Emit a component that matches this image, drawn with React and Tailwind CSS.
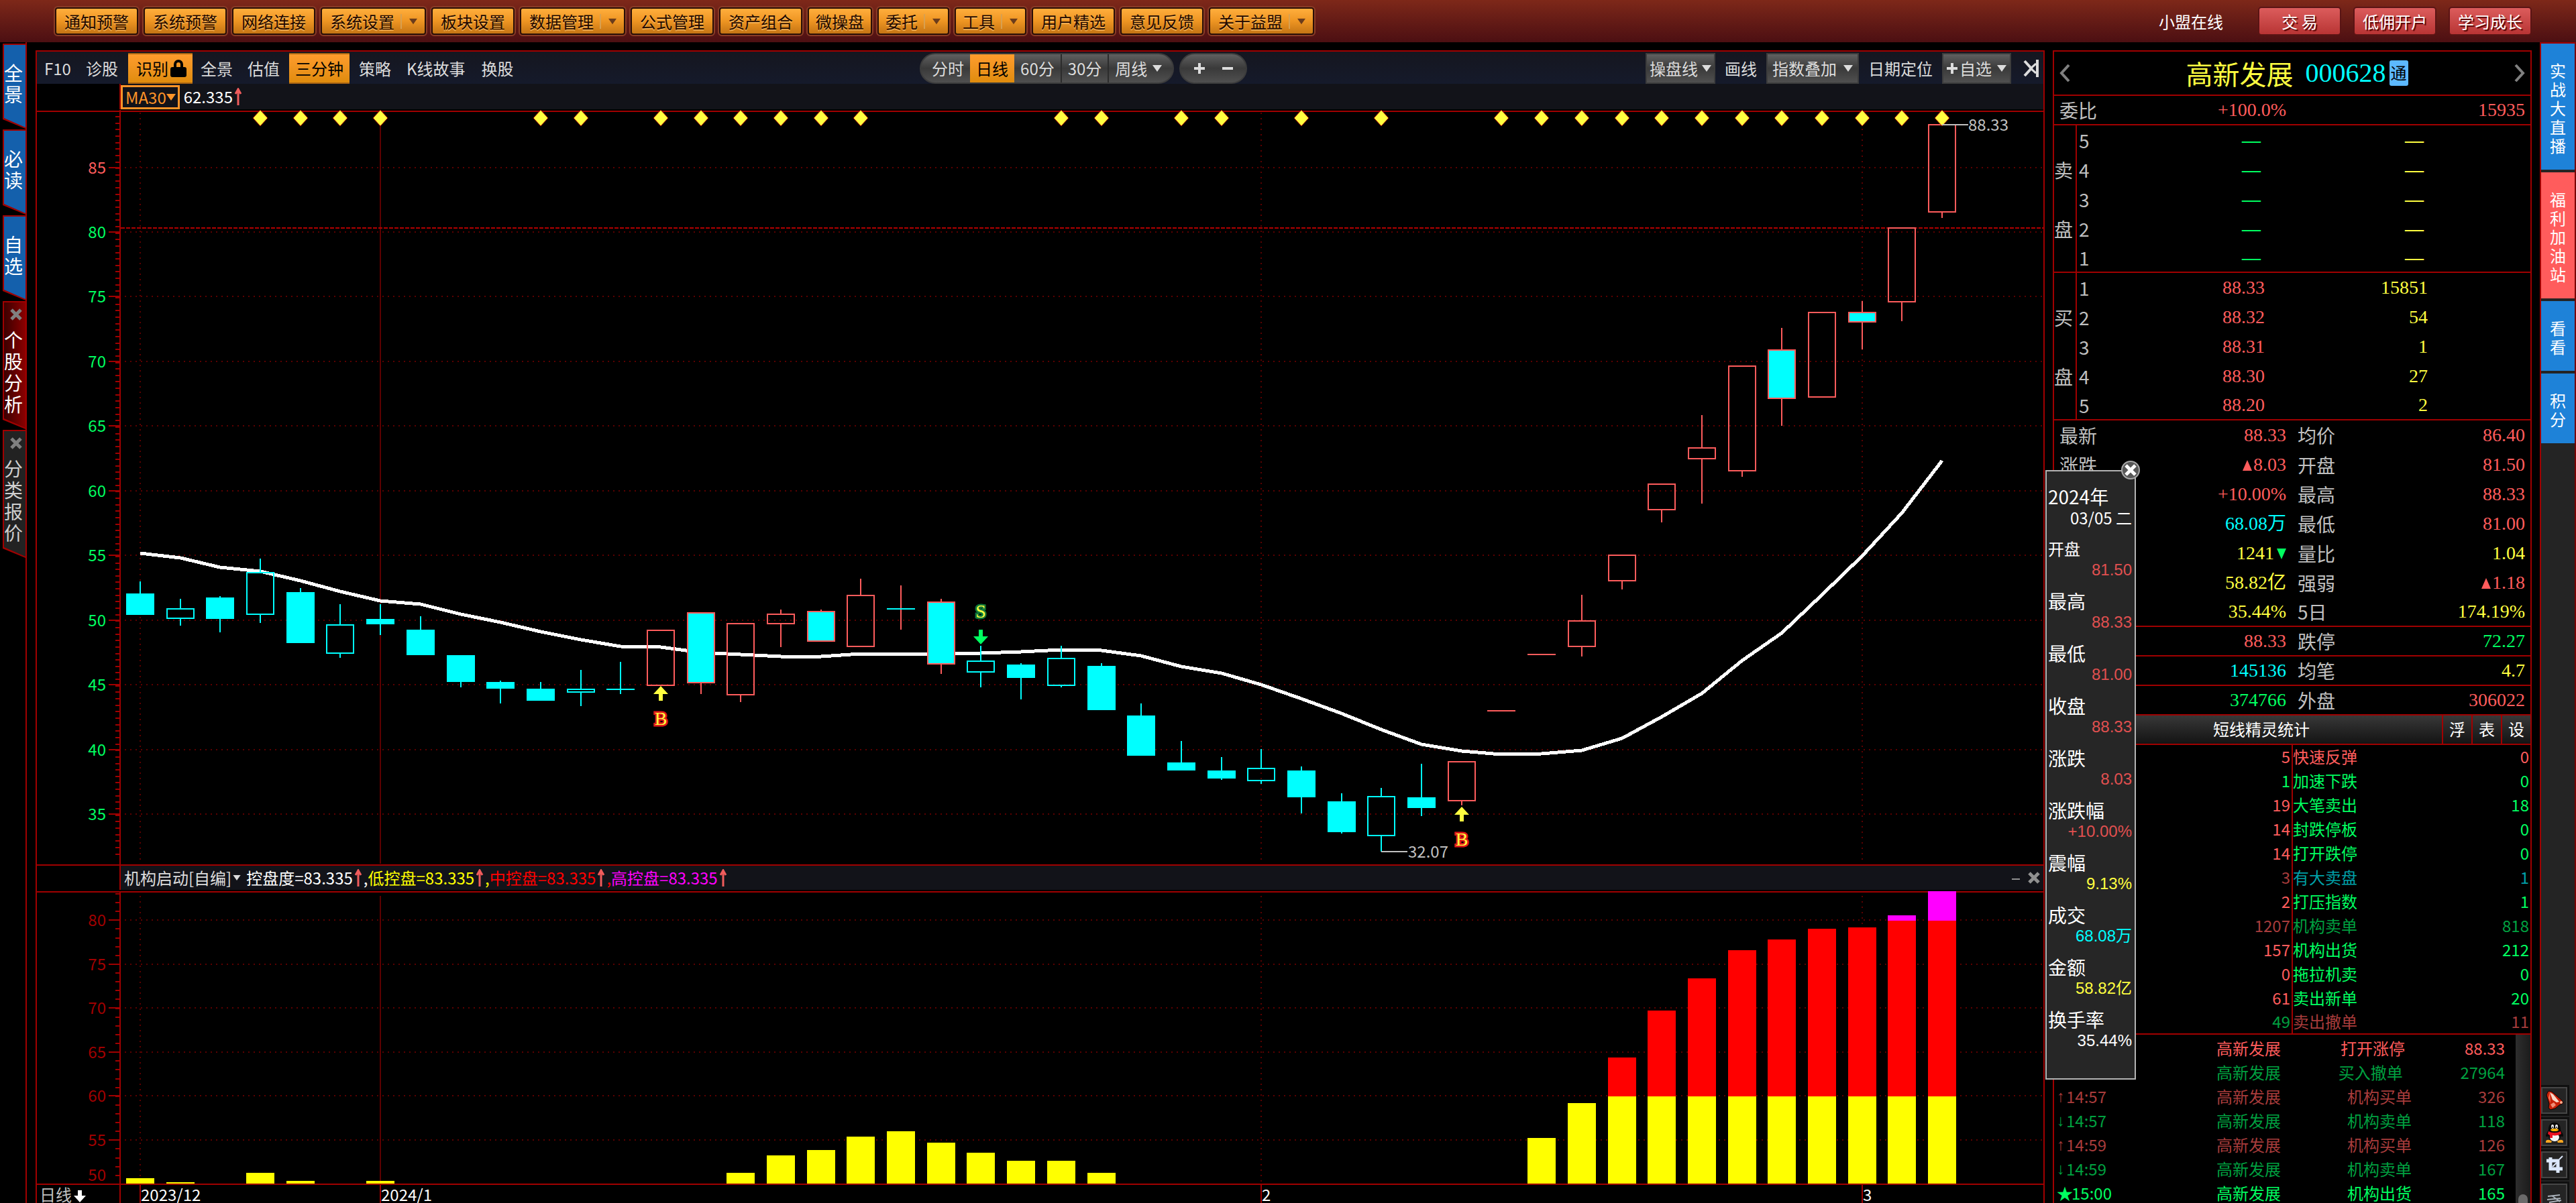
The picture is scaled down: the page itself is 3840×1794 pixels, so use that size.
import { useState } from 'react'
import clsx from 'clsx'

const MENU = [
  ['通知预警'], ['系统预警'], ['网络连接'], ['系统设置', true], ['板块设置'], ['数据管理', true], ['公式管理'],
  ['资产组合'], ['微操盘'], ['委托', true], ['工具', true], ['用户精选'], ['意见反馈'], ['关于益盟', true],
]

const LEFT_TABS = [
  { text: '全景', kind: 'blue' },
  { text: '必读', kind: 'blue' },
  { text: '自选', kind: 'blue' },
  { text: '个股分析', kind: 'red', closable: true },
  { text: '分类报价', kind: 'gray', closable: true },
]

const SIDE_TABS = [
  ['实战大直播', 'bg-[#1e82d8] h-[188px]'],
  ['福利加油站', 'bg-[#ff5c5c] h-[188px]'],
  ['看看', 'bg-[#1e82d8] h-[104px]'],
  ['积分', 'bg-[#1e82d8] h-[104px]'],
]

const COLOR = {
  red: 'text-[#ff5c5c]', green: 'text-[#00ff60]', yellow: 'text-[#ffff40]', cyan: 'text-[#00ffff]',
  dimRed: 'text-[#a83c3c]', dimGreen: 'text-[#00a040]', dimCyan: 'text-[#00a0a8]',
}

// [high, top, bottom, low, kind]  s = solid, h = hollow, r = red hollow, m = red outline with cyan body
const CANDLES = [
  [867, 885, 917, 917, 's'], [893, 907, 923, 933, 'h'], [889, 891, 923, 943, 's'], [833, 853, 917, 929, 'h'],
  [877, 883, 959, 959, 's'], [901, 931, 975, 981, 'h'], [901, 923, 931, 947, 's'], [919, 939, 977, 977, 's'],
  [977, 977, 1017, 1025, 's'], [1015, 1017, 1027, 1049, 's'], [1017, 1027, 1045, 1045, 's'], [999, 1027, 1033, 1053, 'h'],
  [987, 1027, 1029, 1035, 's'], [939, 939, 1023, 1023, 'r'], [913, 913, 1019, 1035, 'm'], [929, 929, 1037, 1047, 'r'],
  [909, 915, 931, 965, 'r'], [909, 911, 957, 957, 'm'], [863, 887, 965, 965, 'r'], [873, 907, 909, 939, 'm'],
  [893, 897, 991, 1005, 'm'], [963, 985, 1003, 1025, 'h'], [989, 991, 1011, 1043, 's'], [963, 981, 1023, 1025, 'h'],
  [989, 993, 1059, 1059, 's'], [1049, 1067, 1127, 1127, 's'], [1105, 1137, 1149, 1149, 's'], [1129, 1149, 1161, 1163, 's'],
  [1117, 1145, 1165, 1169, 'h'], [1143, 1149, 1189, 1213, 's'], [1183, 1195, 1241, 1243, 's'], [1175, 1187, 1247, 1270, 'h'],
  [1139, 1189, 1205, 1217, 's'], [1135, 1135, 1195, 1201, 'r'], [1059, 1059, 1061, 1061, 'r'], [975, 975, 977, 977, 'r'],
  [887, 925, 965, 979, 'r'], [827, 827, 867, 879, 'r'], [721, 721, 761, 779, 'r'], [619, 667, 685, 751, 'r'],
  [545, 545, 703, 711, 'r'], [489, 521, 595, 635, 'm'], [465, 465, 593, 593, 'r'], [449, 465, 481, 521, 'm'],
  [339, 339, 451, 479, 'r'], [185, 185, 317, 325, 'r'],
]

const MA30 = [
  825, 832, 846, 852, 866, 882, 896, 901, 916, 928, 942, 954, 964, 965, 973, 976, 979, 979, 975, 975, 975, 974, 972,
  969, 970, 978, 994, 1004, 1021, 1042, 1064, 1088, 1110, 1120, 1125, 1124, 1119, 1101, 1069, 1034, 985, 944, 887,
  829, 765, 687,
]

const DIAMONDS = [3, 4, 5, 6, 10, 11, 13, 14, 15, 16, 17, 18, 23, 24, 26, 27, 29, 31, 34, 35, 36, 37, 38, 39, 40, 41, 42, 43, 44, 45]

const BARS = {
  0: 1757, 1: 1763, 3: 1749, 4: 1761, 6: 1761, 15: 1749, 16: 1723, 17: 1715, 18: 1695, 19: 1687, 20: 1704, 21: 1719,
  22: 1731, 23: 1731, 24: 1749, 35: 1697, 36: 1645, 37: 1577, 38: 1507, 39: 1459, 40: 1417, 41: 1401, 42: 1385,
  43: 1383, 44: 1365, 45: 1329,
}

const BUY = [['88.33', '15851'], ['88.32', '54'], ['88.31', '1'], ['88.30', '27'], ['88.20', '2']]

const QUOTE = [
  ['最新', '88.33', 'red', '均价', '86.40', 'red'],
  ['涨跌', '8.03', 'red', '开盘', '81.50', 'red', 'up'],
  ['', '+10.00%', 'red', '最高', '88.33', 'red'],
  ['', '68.08万', 'cyan', '最低', '81.00', 'red'],
  ['', '1241', 'yellow', '量比', '1.04', 'yellow', 'down'],
  ['', '58.82亿', 'yellow', '强弱', '1.18', 'red', '', 'up'],
  ['', '35.44%', 'yellow', '5日', '174.19%', 'yellow'],
  ['', '88.33', 'red', '跌停', '72.27', 'green'],
  ['', '145136', 'cyan', '均笔', '4.7', 'yellow'],
  ['', '374766', 'green', '外盘', '306022', 'red'],
]

const STATS = [
  ['5', 'red', '快速反弹', '0', 'red'],
  ['1', 'green', '加速下跌', '0', 'green'],
  ['19', 'red', '大笔卖出', '18', 'green'],
  ['14', 'red', '封跌停板', '0', 'green'],
  ['14', 'red', '打开跌停', '0', 'green'],
  ['3', 'dimRed', '有大卖盘', '1', 'dimCyan'],
  ['2', 'red', '打压指数', '1', 'green'],
  ['1207', 'dimRed', '机构卖单', '818', 'dimGreen'],
  ['157', 'red', '机构出货', '212', 'green'],
  ['0', 'red', '拖拉机卖', '0', 'green'],
  ['61', 'red', '卖出新单', '20', 'green'],
  ['49', 'dimGreen', '卖出撤单', '11', 'dimRed'],
]

const LOG = [
  ['', '', '打开涨停', '88.33', 'red'],
  ['', '', '买入撤单', '27964', 'dimGreen'],
  ['↑', '14:57', '机构买单', '326', 'dimRed'],
  ['↓', '14:57', '机构卖单', '118', 'dimGreen'],
  ['↑', '14:59', '机构买单', '126', 'dimRed'],
  ['↓', '14:59', '机构卖单', '167', 'dimGreen'],
  ['★', '15:00', '机构出货', '165', 'green'],
]

const DAY = [
  ['开盘', '81.50', 'text-[#e05050]'], ['最高', '88.33', 'text-[#e05050]'], ['最低', '81.00', 'text-[#e05050]'],
  ['收盘', '88.33', 'text-[#e05050]'], ['涨跌', '8.03', 'text-[#e05050]'], ['涨跌幅', '+10.00%', 'text-[#e05050]'],
  ['震幅', '9.13%', 'text-[#ffff40]'], ['成交', '68.08万', 'text-[#00ffff]'], ['金额', '58.82亿', 'text-[#ffff40]'],
  ['换手率', '35.44%', 'text-white'],
]

const cx = i => Math.round(209 + i * 59.69)
const priceY = v => Math.round(346 + (80 - v) * 19.29)
const subY = v => Math.round(1372 + (80 - v) * 13.12)

function Caret({ className = 'w-[14px] h-[10px]' }) {
  return <svg viewBox="0 0 14 10" className={clsx('shrink-0', className)}><path d="M0 0h14L7 10z" fill="currentColor" /></svg>
}

function Rise() {
  return (
    <svg viewBox="0 0 16 26" className="w-[16px] h-[26px] shrink-0 text-[#f05c5c]">
      <path d="M8 1v25M4 9l4-7 4 7" fill="none" stroke="currentColor" strokeWidth="3" />
    </svg>
  )
}

function Cross({ className }) {
  return (
    <svg viewBox="0 0 18 18" className={clsx('w-[18px] h-[18px]', className)}>
      <path d="M2 2l14 14M16 2L2 16" stroke="currentColor" strokeWidth="5" />
    </svg>
  )
}

function TopBar() {
  const red = 'w-[124px] h-[43px] rounded-[5px] border-2 border-[#5a1414] bg-linear-to-b from-[#dc5c5c] to-[#b83434] text-white text-shadow-[2px_2px_1px_#500000]'
  return (
    <header className="h-[63px] shrink-0 flex items-center bg-linear-to-b from-[#7e2819] to-[#4c0f12] pl-[82px] pr-[66px]">
      <nav className="flex gap-[8px] text-[#200800]">
        {MENU.map(([label, drop]) => (
          <button key={label}
            className={clsx(
              'h-[41px] flex items-center rounded-[4px] border-2 border-[#2a0f06] outline-2 outline-[#8a3c26] bg-linear-to-b from-[#ffae3c] via-[#ee9522] to-[#c47414] text-shadow-[0_2px_0_#ffc878a0]',
              label.length < 4 ? 'pl-[10px]' : 'pl-[12px]',
              !drop && (label.length < 4 ? 'pr-[10px]' : 'pr-[12px]'))}>
            {label}
            {drop && (
              <span className="flex items-center ml-[9px]">
                <span className="h-[22px] border-l-2 border-[#d8a050]" />
                <span className="w-[34px] flex justify-center text-[#6a3c1c]"><Caret className="w-[12px] h-[12px]" /></span>
              </span>
            )}
          </button>
        ))}
      </nav>
      <div className="ml-auto flex items-center gap-[18px]">
        <a href="#chat" className="text-white mr-[34px]">小盟在线</a>
        <button className={red}>交 易</button>
        <button className={red}>低佣开户</button>
        <button className={red}>学习成长</button>
      </div>
    </header>
  )
}

function LeftTabs() {
  return (
    <nav className="w-[40px] shrink-0 border-r-2 border-[#a00000] pl-[4px] pt-[2px] text-[28px] leading-[32px]">
      {LEFT_TABS.map(t => (
        <button key={t.text}
          className={clsx(
            'block w-full bg-[#a00000] pt-[2px] pl-[2px] pb-[2px] mb-px [clip-path:polygon(0_0,100%_0,100%_100%,0_calc(100%-14px))]',
            t.closable ? 'h-[191px]' : 'h-[127px]')}>
          <span className={clsx(
            'h-full flex flex-col [clip-path:polygon(0_0,100%_0,100%_100%,0_calc(100%-14px))]',
            t.kind === 'blue' && 'bg-[#1460ac] text-white pt-[25px]',
            t.kind === 'red' && 'bg-linear-to-r from-[#3c0000] to-[#8c0000] text-white pt-[9px]',
            t.kind === 'gray' && 'bg-[#222222] text-[#d0d0d0] pt-[9px]')}>
            {t.closable && <Cross className="text-[#808080] mb-[12px] ml-[9px]" />}
            <span className="w-[28px] whitespace-normal break-all">{t.text}</span>
          </span>
        </button>
      ))}
    </nav>
  )
}

function Toolbar() {
  const [period, setPeriod] = useState('日线')
  const hot = 'h-[46px] flex items-center border-y-2 border-[#a86414] bg-linear-to-b from-[#ff9c2c] to-[#e08c0c] text-black'
  const gray = 'h-[46px] flex items-center border-2 border-[#3c3c3c] bg-linear-to-b from-[#606060] via-[#3a3a3a] to-[#505050]'
  return (
    <div className="h-[48px] pt-[2px] flex items-center justify-between bg-linear-to-b from-[#15161f] to-[#151a2b] text-[#dcdcdc]">
      <div className="flex items-center">
        <button className="px-[11px]">F10</button>
        <button className="px-[11px]">诊股</button>
        <button className={clsx(hot, 'ml-[4px] mr-px pl-[12px] pr-[8px] gap-[2px]')}>
          识别
          <svg viewBox="0 0 26 28" className="w-[26px] h-[28px]">
            <path d="M8 13V8a5 5 0 0 1 10 0v5" fill="none" stroke="#000" strokeWidth="4" />
            <rect x="1" y="12" width="24" height="15" rx="3" fill="#000" />
          </svg>
        </button>
        <button className="px-[11px]">全景</button>
        <button className="px-[11px]">估值</button>
        <button className={clsx(hot, 'ml-[3px] mr-[3px] px-[9px]')}>三分钟</button>
        <button className="px-[11px]">策略</button>
        <button className="px-[12px]">K线故事</button>
        <button className="px-[12px]">换股</button>
      </div>
      <div className="flex gap-[8px]">
        <div className={clsx(gray, 'rounded-full overflow-hidden')}>
          {['分时', '日线', '60分', '30分', '周线'].map(p => (
            <button key={p} onClick={() => setPeriod(p)}
              className={clsx(
                'h-full flex items-center gap-[8px] px-[9px]',
                p === '分时' && 'pl-[16px]', p === '周线' && 'pr-[16px]',
                (p === '60分' || p === '30分') && 'border-r-2 border-[#2c2c2c]',
                p === period && 'bg-linear-to-b from-[#ff9c2c] to-[#e08c0c] text-black')}>
              {p}{p === '周线' && <Caret />}
            </button>
          ))}
        </div>
        <div className={clsx(gray, 'rounded-full w-[101px] justify-center gap-[26px]')}>
          <button aria-label="放大"><svg viewBox="0 0 16 16" className="w-[16px] h-[16px]"><path d="M8 0v16M0 8h16" stroke="#dcdcdc" strokeWidth="4" /></svg></button>
          <button aria-label="缩小"><svg viewBox="0 0 16 16" className="w-[16px] h-[16px]"><path d="M0 8h16" stroke="#dcdcdc" strokeWidth="4" /></svg></button>
        </div>
      </div>
      <div className="flex items-center">
        <button className={clsx(gray, 'px-[4px] gap-[6px]')}>操盘线<Caret /></button>
        <button className="px-[14px]">画线</button>
        <button className={clsx(gray, 'px-[7px] gap-[10px]')}>指数叠加<Caret /></button>
        <button className="px-[14px]">日期定位</button>
        <button className={clsx(gray, 'px-[5px] gap-[8px]')}>
          <span className="flex items-center gap-[3px]">
            <svg viewBox="0 0 16 16" className="w-[16px] h-[16px]"><path d="M8 0v16M0 8h16" stroke="#dcdcdc" strokeWidth="4" /></svg>自选
          </span>
          <Caret />
        </button>
        <button aria-label="收起" className="ml-[18px] mr-[6px]">
          <svg viewBox="0 0 24 26" className="w-[24px] h-[26px]"><path d="M2 2l10 11L2 24M21 0v26" fill="none" stroke="#dcdcdc" strokeWidth="4" /><path d="M19 6l-8 7 8 7" fill="none" stroke="#dcdcdc" strokeWidth="3" /></svg>
        </button>
      </div>
    </div>
  )
}

function Candle({ i, data }) {
  const [high, top, bottom, low, kind] = data
  const color = kind === 's' || kind === 'h' ? '#00ffff' : '#ff5c5c'
  const fill = kind === 's' || kind === 'm' ? '#00ffff' : 'none'
  const x = cx(i)
  return (
    <g stroke={color} strokeWidth="2">
      {high < top && <path d={`M${x} ${high}V${top}`} />}
      {low > bottom && <path d={`M${x} ${bottom}V${low}`} />}
      {bottom - top <= 2
        ? <path d={`M${x - 21} ${top + 1}H${x + 21}`} stroke={kind === 'm' ? '#00ffff' : color} />
        : <rect x={x - 20} y={top + 1} width="40" height={bottom - top - 2} fill={fill} />}
    </g>
  )
}

function Signal({ i, y, type }) {
  const x = cx(i)
  const buy = type === 'B'
  return (
    <g>
      <path transform={`translate(${x} ${y})${buy ? '' : ' scale(1 -1)'}`} d="M0 0l11 12H3v10h-6V12h-8z" fill={buy ? '#ffff40' : '#00ff60'} />
      <text x={x} y={buy ? y + 58 : y - 40} textAnchor="middle" strokeWidth="5" paintOrder="stroke" fill="#ffff40"
        stroke={buy ? '#e01818' : '#107838'} className="font-['Liberation_Serif',serif] text-[28px]">{type}</text>
    </g>
  )
}

function VerticalGrid({ from, to }) {
  return (
    <g stroke="#5c0000" strokeWidth="2">
      {[0, 28, 43].map(i => <path key={i} d={`M${cx(i)} ${from}V${to}`} strokeDasharray="2 6" />)}
      <path d={`M${cx(6)} ${from}V${to}`} />
    </g>
  )
}

function PriceChart() {
  const minor = Array.from({ length: 115 }, (_, k) => 174 + k * 9.645).filter(y => y < 1280)
  return (
    <svg viewBox="55 164 2991 1125" className="block w-full h-auto text-[24px]">
      <path d="M55 166H3046" stroke="#a00000" strokeWidth="2" />
      <VerticalGrid from={168} to={1288} />
      <path d="M179 164V1289" stroke="#a00000" strokeWidth="2" />
      {minor.map(y => <path key={y} d={`M172 ${Math.round(y)}H179`} stroke="#a00000" strokeWidth="2" />)}
      {[85, 80, 75, 70, 65, 60, 55, 50, 45, 40, 35].map(v => (
        <g key={v}>
          <path d={`M186 ${priceY(v)}H3046`} stroke="#5c0000" strokeWidth="2" strokeDasharray="2 6" />
          <path d={`M162 ${priceY(v)}H179`} stroke="#a00000" strokeWidth="2" />
          <text x="158" y={priceY(v) + 9} textAnchor="end" fill={v > 80 ? '#ff5c5c' : '#00ff60'}>{v}</text>
        </g>
      ))}
      <path d="M180 340H3046" stroke="#b00000" strokeWidth="2" strokeDasharray="6 2" />
      <polyline points={MA30.map((y, i) => `${cx(i)},${y}`).join(' ')} fill="none" stroke="#fff" strokeWidth="5" shapeRendering="crispEdges" />
      {CANDLES.map((c, i) => <Candle key={i} i={i} data={c} />)}
      {DIAMONDS.map(i => <path key={i} d={`M${cx(i)} 164l11 12-11 12-11-12z`} fill="#ffff40" stroke="#a00000" />)}
      <Signal i={13} y={1023} type="B" />
      <Signal i={21} y={961} type="S" />
      <Signal i={33} y={1203} type="B" />
      <g fill="#c0c0c0">
        <path d="M2895 186h39M2059 1270h39" stroke="#c0c0c0" strokeWidth="2" />
        <text x="2934" y="195">88.33</text>
        <text x="2099" y="1279">32.07</text>
      </g>
    </svg>
  )
}

function ControlChart() {
  const minor = Array.from({ length: 33 }, (_, k) => 1333 + k * 13.12).filter(y => y < 1760)
  return (
    <svg viewBox="55 1329 2991 465" className="block w-full h-auto text-[24px]">
      <path d="M55 1330H3046M55 1766H3046" stroke="#a00000" strokeWidth="2" />
      <VerticalGrid from={1336} to={1764} />
      <path d={`M179 1329V1794M${cx(0)} 1767V1794M${cx(6)} 1767V1794M${cx(28)} 1767V1794M${cx(43)} 1767V1794`} stroke="#a00000" strokeWidth="2" />
      {minor.map(y => <path key={y} d={`M172 ${Math.round(y)}H179`} stroke="#a00000" strokeWidth="2" />)}
      {[80, 75, 70, 65, 60, 55].map(v => (
        <g key={v}>
          <path d={`M186 ${subY(v)}H3046`} stroke="#5c0000" strokeWidth="2" strokeDasharray="2 6" />
          <path d={`M162 ${subY(v)}H179`} stroke="#a00000" strokeWidth="2" />
          <text x="158" y={subY(v) + 9} textAnchor="end" fill="#a00000">{v}</text>
        </g>
      ))}
      <text x="158" y="1761" textAnchor="end" fill="#a00000">50</text>
      {Object.entries(BARS).map(([i, top]) => {
        const x = cx(Number(i)) - 21
        return (
          <g key={i}>
            {top < 1373 && <rect x={x} y={top} width="42" height={1373 - top} fill="#ff00ff" />}
            {top < 1635 && <rect x={x} y={Math.max(top, 1373)} width="42" height={1635 - Math.max(top, 1373)} fill="#ff0000" />}
            <rect x={x} y={Math.max(top, 1635)} width="42" height={1765 - Math.max(top, 1635)} fill="#ffff00" />
          </g>
        )
      })}
      <text x="59" y="1791" fill="#c0c0c0">日线</text>
      <path d="M116 1775h6v8h6l-9 10-9-10h6z" fill="#fff" />
      <g fill="#fff">
        <text x={cx(0) + 1} y="1791">2023/12</text>
        <text x={cx(6) + 1} y="1791">2024/1</text>
        <text x={cx(28) + 1} y="1791">2</text>
        <text x={cx(43) + 1} y="1791">3</text>
      </g>
    </svg>
  )
}

function ChartPanel() {
  return (
    <main className="flex-1 min-w-0 self-stretch mt-[12px] border-2 border-b-0 border-[#a00000]">
      <Toolbar />
      <div className="h-[39px] flex pl-[123px]">
        <div className="flex-1 h-[38px] border-l-2 border-[#a00000] bg-[#121319] flex items-center">
          <button className="h-[36px] mt-px border-[3px] border-[#ff9428] pl-[4px] pr-[3px] flex items-center text-[#ff9428]">MA30<Caret /></button>
          <span className="ml-[6px] text-white">62.335</span>
          <Rise />
        </div>
      </div>
      <PriceChart />
      <div className="h-[40px] flex border-t-2 border-[#a00000] pl-[123px]">
        <div className="flex-1 h-[36px] border-l-2 border-[#a00000] bg-[#121319] flex items-center pl-[5px]">
          <button className="flex items-center gap-[2px] text-[#dcdcdc] mr-[8px]">机构启动[自编]<Caret className="w-[12px] h-[8px]" /></button>
          <span className="flex items-center text-white">控盘度=83.335<Rise />,</span>
          <span className="flex items-center text-[#ffff00]">低控盘=83.335<Rise />,</span>
          <span className="flex items-center text-[#ff0000]">中控盘=83.335<Rise />,</span>
          <span className="flex items-center text-[#ff00ff]">高控盘=83.335<Rise /></span>
          <span className="ml-auto mr-[5px] flex items-center gap-[12px] text-[#909090]">
            <button aria-label="最小化" className="w-[12px] border-t-2 border-[#909090] mt-[4px]" />
            <button aria-label="关闭指标"><Cross /></button>
          </span>
        </div>
      </div>
      <ControlChart />
    </main>
  )
}

function Levels({ name, rows, sell }) {
  return (
    <table className="w-full table-fixed border-b-2 border-[#a00000] border-separate border-spacing-0 text-[28px]">
      <colgroup><col className="w-[34px]" /><col className="w-[40px]" /><col className="w-[240px]" /><col className="w-[243px]" /><col /></colgroup>
      <tbody>
        {rows.map(([price, qty], i) => (
          <tr key={i} className={i === 4 ? 'h-[42px]' : 'h-[44px]'}>
            <td className="border-r-2 border-[#a00000] text-[#c0c0c0]">{i === 1 ? name[0] : i === 3 ? name[1] : ''}</td>
            <td className="pl-[3px] text-[#c0c0c0]">{sell ? 5 - i : i + 1}</td>
            <td className={clsx("text-right font-['Liberation_Serif',serif]", sell ? 'pr-[6px] font-bold text-[#00ff60]' : 'text-[#ff5c5c]')}>{price}</td>
            <td className={clsx("text-right text-[#ffff40] font-['Liberation_Serif',serif]", sell && 'pr-[6px] font-bold')}>{qty}</td>
            <td />
          </tr>
        ))}
      </tbody>
    </table>
  )
}

function Mark({ dir }) {
  if (!dir) return null
  return (
    <svg viewBox="0 0 14 16" className={clsx('inline w-[14px] h-[16px] mb-[3px]', dir === 'up' ? 'mr-[2px] text-[#ff5c5c]' : 'ml-[4px] text-[#00ff60]')}>
      <path d={dir === 'up' ? 'M7 0l7 16H0z' : 'M0 0h14L7 16z'} fill="currentColor" />
    </svg>
  )
}

function QuotePanel() {
  const num = "text-right font-['Liberation_Serif','Noto_Sans_CJK_SC',serif]"
  return (
    <aside className="w-[714px] shrink-0 self-stretch mt-[12px] border-2 border-b-0 border-[#a00000] flex flex-col">
      <div className="h-[66px] shrink-0 flex items-center justify-between px-[6px] border-b-2 border-[#a00000]">
        <button aria-label="上一只"><svg viewBox="0 0 20 26" className="w-[20px] h-[26px]"><path d="M16 1L5 13l11 12" fill="none" stroke="#808080" strokeWidth="4" /></svg></button>
        <h1 className="flex items-center text-[40px] pl-[14px]">
          <span className="text-[#ffff40]">高新发展</span>
          <span className="ml-[18px] text-[#00ffff] font-['Liberation_Serif',serif]">000628</span>
          <span className="ml-[5px] w-[28px] h-[38px] rounded-[3px] bg-[#5cb8ff] text-black text-[24px] leading-[36px] text-center">通</span>
        </h1>
        <button aria-label="下一只"><svg viewBox="0 0 20 26" className="w-[20px] h-[26px]"><path d="M4 1l11 12L4 25" fill="none" stroke="#808080" strokeWidth="4" /></svg></button>
      </div>
      <div className="h-[44px] shrink-0 flex items-center border-b-2 border-[#a00000] text-[28px] text-[#ff5c5c] pl-[8px] pr-[8px]">
        <span className="text-[#c0c0c0]">委比</span>
        <span className={clsx(num, 'w-[282px]')}>+100.0%</span>
        <span className={clsx(num, 'ml-auto')}>15935</span>
      </div>
      <Levels name="卖盘" sell rows={Array(5).fill(['—', '—'])} />
      <Levels name="买盘" rows={BUY} />
      <table className="w-full table-fixed border-separate border-spacing-0 text-[28px]">
        <colgroup><col className="w-[120px]" /><col className="w-[226px]" /><col className="w-[130px]" /><col /></colgroup>
        <tbody>
          {QUOTE.map(([a, av, ac, b, bv, bc, am, bm], i) => (
            <tr key={b} className={clsx('h-[44px]', i > 5 && '[&>td]:border-b-2 [&>td]:border-[#a00000]')}>
              <td className="pl-[8px] text-[#c0c0c0]">{a}</td>
              <td className={clsx(num, COLOR[ac])}>{am === 'up' && <Mark dir="up" />}{av}{am === 'down' && <Mark dir="down" />}</td>
              <td className="pl-[17px] text-[#c0c0c0]">{b}</td>
              <td className={clsx(num, 'pr-[8px]', COLOR[bc])}><Mark dir={bm} />{bv}</td>
            </tr>
          ))}
        </tbody>
      </table>
      <div className="h-[44px] shrink-0 flex border-b-2 border-[#a00000] bg-linear-to-b from-[#383838] to-[#141414] text-white">
        <h2 className="flex-1 text-center leading-[40px] pl-[40px]">短线精灵统计</h2>
        {['浮', '表', '设'].map(t => <button key={t} className="w-[44px] border-l-2 border-[#a00000] leading-[40px] pb-[2px]">{t}</button>)}
      </div>
      <table className="w-full table-fixed border-b-2 border-[#a00000] border-separate border-spacing-0">
        <colgroup><col className="w-[356px]" /><col className="w-[200px]" /><col /></colgroup>
        <tbody>
          {STATS.map(([l, lc, label, r, rc], i) => (
            <tr key={label} className={i === 11 ? 'h-[34px]' : 'h-[36px]'}>
              <td className={clsx('pb-[2px] text-right pr-[2px] border-r-2 border-[#a00000]', COLOR[lc])}>{l}</td>
              <td className={clsx('pb-[2px]', COLOR[rc])}>{label}</td>
              <td className={clsx('pb-[2px] text-right pr-[2px]', COLOR[rc])}>{r}</td>
            </tr>
          ))}
        </tbody>
      </table>
      <div className="flex-1 flex min-h-0 overflow-hidden">
        <ul className="flex-1 pt-[2px] pl-[4px]">
          {LOG.map(([mark, time, action, value, c], i) => (
            <li key={i} className={clsx('h-[36px] leading-[36px] flex', COLOR[c])}>
              <span className="w-[238px] flex">
                {mark === '★' ? <span className="w-[22px]">★</span> : <span className="w-[14px] font-['Liberation_Serif',serif] font-bold">{mark}</span>}{time}
              </span>
              <span className="flex-1 flex justify-between pr-[16px]"><span>高新发展</span><span>{action}</span><span>{value}</span></span>
            </li>
          ))}
        </ul>
        <div className="w-[22px] bg-linear-to-r from-[#2e2e2e] to-[#1c1c1c] flex flex-col justify-end items-center">
          <div className="w-[14px] h-[13px] rounded-t-full bg-[#6a6a6a]" />
        </div>
      </div>
    </aside>
  )
}

function SideRail() {
  const box = 'w-[42px] h-[46px] border-[3px] border-[#101010] border-l-0 bg-[#242424]'
  const inner = 'w-full h-full border-2 border-[#464646] flex items-center justify-center overflow-hidden'
  return (
    <nav className="w-[54px] shrink-0 self-stretch border-l-2 border-t-2 border-[#a00000] border-r-2 border-r-[#7a0000] bg-[#242424] flex flex-col overflow-hidden">
      <div className="flex flex-col gap-[4px]">
        {SIDE_TABS.map(([t, cls]) => (
          <button key={t} className={clsx('flex flex-col items-center justify-center pt-[4px] leading-[28px] text-white', cls)}>
            <span className="w-[24px] whitespace-normal break-all">{t}</span>
          </button>
        ))}
      </div>
      <div className="mt-auto -mb-[14px] flex flex-col gap-[2px]">
        <button aria-label="提醒" className={box}>
          <span className={inner}>
            <svg viewBox="0 0 28 30" className="w-[28px] h-[30px] shrink-0">
              <path d="M6 1l4 1 15 13 2 4-6 3-6 5-7 2-3-3 1-6-4-13 2-5z" fill="#c82008" stroke="#100000" />
              <path d="M7 3l5 3 9 11-4 1-6-4z" fill="#f8d8c8" />
              <path d="M7 3l1 16-3-8z" fill="#ff7858" />
              <path d="M8 21l5-3 3 4-5 4z" fill="#f09078" />
              <circle cx="24" cy="18" r="2" fill="#ffb090" />
            </svg>
          </span>
        </button>
        <button aria-label="QQ" className={box}>
          <span className={inner}>
            <svg viewBox="0 0 28 32" className="w-[28px] h-[32px] shrink-0">
              <path d="M14 1c6 0 9 4 9 10 0 3 4 6 4 10-1 2-3 1-4 0 0 5-4 8-9 8s-9-3-9-8c-1 1-3 2-4 0 0-4 4-7 4-10 0-6 3-10 9-10z" fill="#080808" />
              <ellipse cx="14" cy="23" rx="7" ry="6" fill="#f4f4f4" />
              <ellipse cx="11" cy="7" rx="2" ry="3" fill="#fff" /><ellipse cx="17" cy="7" rx="2" ry="3" fill="#fff" />
              <circle cx="11" cy="8" r="1" /><circle cx="17" cy="8" r="1" />
              <ellipse cx="14" cy="12" rx="6" ry="2" fill="#ffb400" />
              <path d="M5 14c6 3 12 3 18 0l1 4c-4 2-9 3-13 2v4H7v-4l-3-2z" fill="#e81020" />
              <path d="M1 29c1-3 5-3 9 0l-1 2H1zM27 29c-1-3-5-3-9 0l1 2h8z" fill="#ffa820" />
            </svg>
          </span>
        </button>
        <button aria-label="截图" className={box}>
          <span className={inner}>
            <svg viewBox="0 0 28 28" className="w-[28px] h-[28px] shrink-0">
              <path d="M8 3v17h18M2 8h17v18" fill="none" stroke="#dce8fc" strokeWidth="5" />
              <path d="M11 17l6-6M21 6l5-5" stroke="#dce8fc" strokeWidth="2" />
            </svg>
          </span>
        </button>
        <button aria-label="更多" className={box}>
          <span className={inner}>
            <svg viewBox="0 0 28 28" className="w-[28px] h-[28px] shrink-0 mt-[10px]">
              <path d="M4 8l18-2M3 13l20-2M6 17l18-3M3 20h22M10 7l12 9" stroke="#a8b0b8" strokeWidth="2" />
            </svg>
          </span>
        </button>
      </div>
    </nav>
  )
}

// Floating day card, sits over the gap between the chart and the quote panel
function DayCard({ onClose }) {
  return (
    <section className="absolute right-[656px] top-[701px] w-[135px] h-[909px] bg-[#262626] border-2 border-[#b4b4b4] pt-[21px] pl-[2px] pr-[4px] text-white z-10">
      <button aria-label="关闭" onClick={onClose}
        className="absolute -top-[16px] -right-[8px] w-[28px] h-[28px] rounded-full border-2 border-[#a8a8a8] bg-[#585858] flex items-center justify-center">
        <Cross className="text-white" />
      </button>
      <div className="h-[78px] leading-[32px]">
        <p className="text-[28px]">2024年</p>
        <p className="text-right">03/05 二</p>
      </div>
      <dl>
        {DAY.map(([k, v, c], i) => (
          <div key={k} className="h-[78px] leading-[32px]">
            <dt className={i ? 'text-[28px]' : 'text-[24px]'}>{k}</dt>
            <dd className={clsx("text-right font-['Liberation_Sans','Noto_Sans_CJK_SC',sans-serif]", c)}>{v}</dd>
          </div>
        ))}
      </dl>
    </section>
  )
}

export default function App() {
  const [card, setCard] = useState(true)
  return (
    <div className="relative h-screen overflow-hidden flex flex-col bg-black text-[24px] leading-[32px] font-['Noto_Sans_CJK_SC',sans-serif] whitespace-nowrap">
      <TopBar />
      <div className="flex-1 min-h-0 flex">
        <LeftTabs />
        <div className="flex-1 min-w-0 flex gap-[12px] pl-[13px]">
          <ChartPanel />
          <QuotePanel />
          <SideRail />
        </div>
      </div>
      {card && <DayCard onClose={() => setCard(false)} />}
    </div>
  )
}
